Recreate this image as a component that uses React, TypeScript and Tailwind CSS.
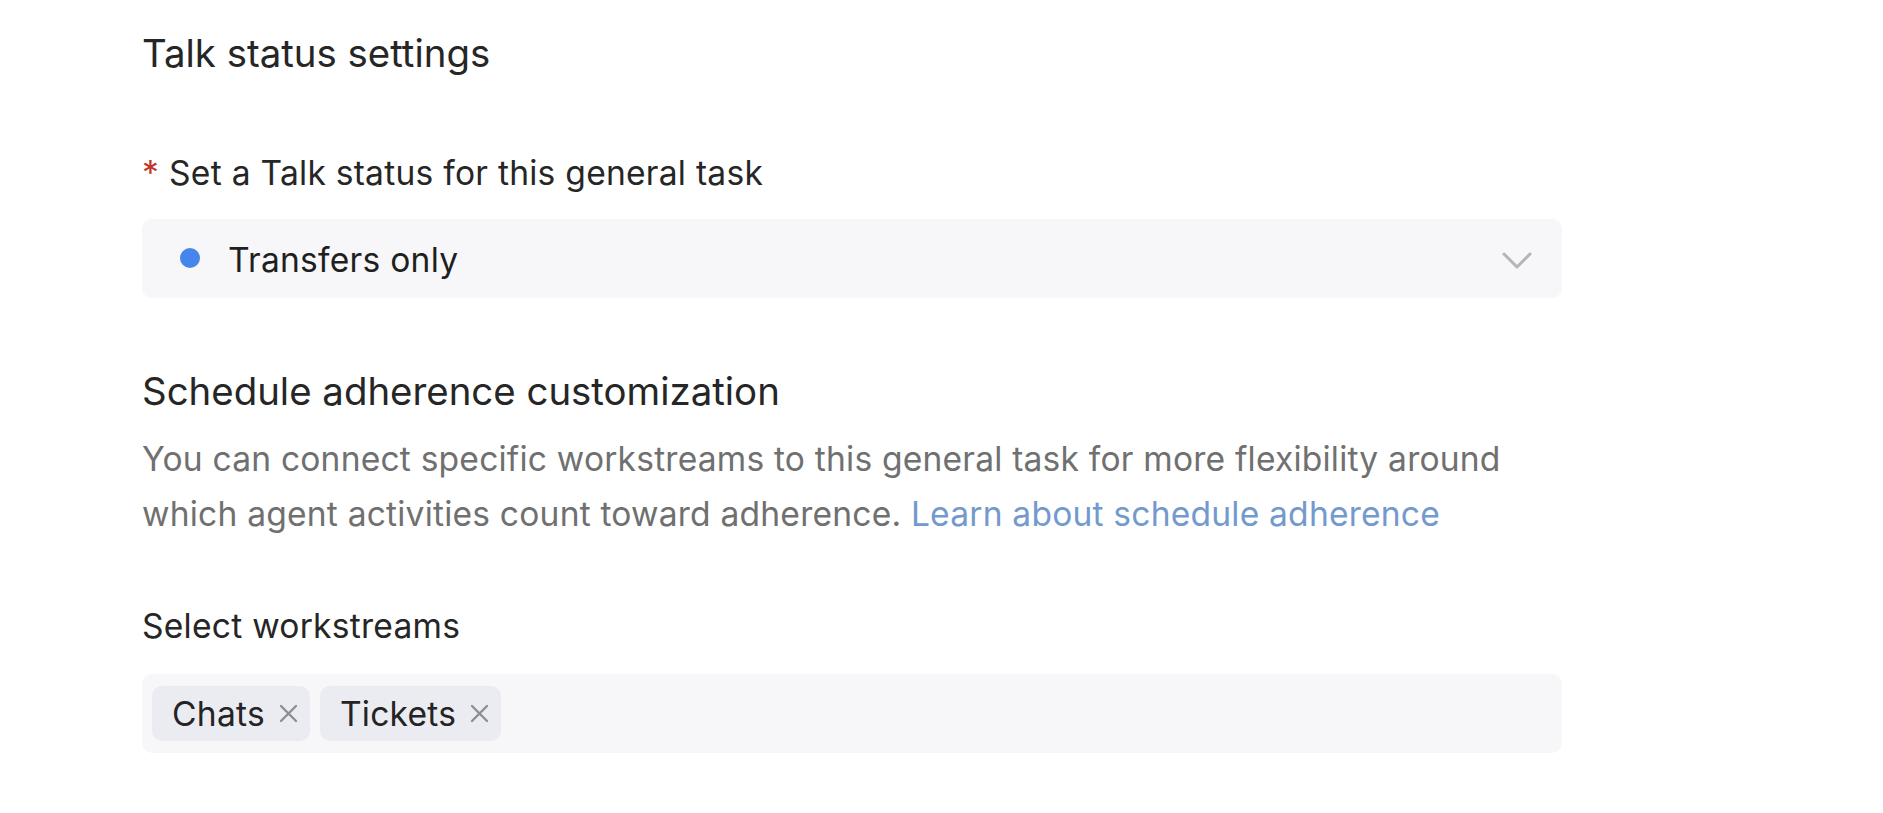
import React from 'react';

const CloseIcon = () => (
  <svg width="19" height="19" viewBox="0 0 19 19" fill="none" stroke="#8d8d92" strokeWidth="2.4" strokeLinecap="round">
    <path d="M2 2 L17 17 M17 2 L2 17" />
  </svg>
);

const Chip = ({ label }: { label: string }) => (
  <span className="flex h-[55px] items-center gap-[14px] rounded-[10px] bg-[#ebecf1] pl-[20px] pr-[12px] text-[33.6px] leading-[48px] tracking-[0.25px] text-[#242424]">
    {label}
    <CloseIcon />
  </span>
);

export default function App() {
  return (
    <div className="min-h-screen bg-white font-['Inter','Liberation_Sans',sans-serif]">
      <div className="ml-[142px] w-[1420px] pt-[25px]">
        <h2 className="text-[38.4px] leading-[57.6px] font-normal text-[#262626]">Talk status settings</h2>

        <label className="mt-[66px] block text-[33.6px] leading-[48px] tracking-[0.25px] text-[#262626]">
          <span className="mr-[10px] text-[#c0362c]">*</span>
          Set a Talk status for this general task
        </label>

        <div className="mt-[22px] flex h-[79px] items-center rounded-[10px] bg-[#f7f7f9] pl-[38px] pr-[30px]">
          <span className="h-[20px] w-[20px] rounded-full bg-[#4686ec]" />
          <span className="ml-[28px] flex-1 pt-[3px] text-[33.6px] leading-[48px] tracking-[0.25px] text-[#1f1f1f]">Transfers only</span>
          <svg width="30" height="17" viewBox="0 0 30 17" fill="none" stroke="#b4b4b9" strokeWidth="3" strokeLinecap="round" strokeLinejoin="round" className="mt-[5px]">
            <path d="M2 2 L15 15 L28 2" />
          </svg>
        </div>

        <h2 className="mt-[65px] text-[38.4px] leading-[57.6px] font-normal text-[#262626]">Schedule adherence customization</h2>
        <p className="mt-[11px] text-[33.6px] leading-[55px] tracking-[0.2px] text-[#707070]">
          You can connect specific workstreams to this general task for more flexibility around which agent activities count toward adherence.{' '}
          <a className="text-[#7399cd]">Learn about schedule adherence</a>
        </p>

        <label className="mt-[61px] block text-[33.6px] leading-[48px] tracking-[0.25px] text-[#262626]">Select workstreams</label>

        <div className="mt-[24px] flex h-[79px] items-center gap-[10px] rounded-[10px] bg-[#f7f7f9] px-[10px]">
          <Chip label="Chats" />
          <Chip label="Tickets" />
        </div>
      </div>
    </div>
  );
}
